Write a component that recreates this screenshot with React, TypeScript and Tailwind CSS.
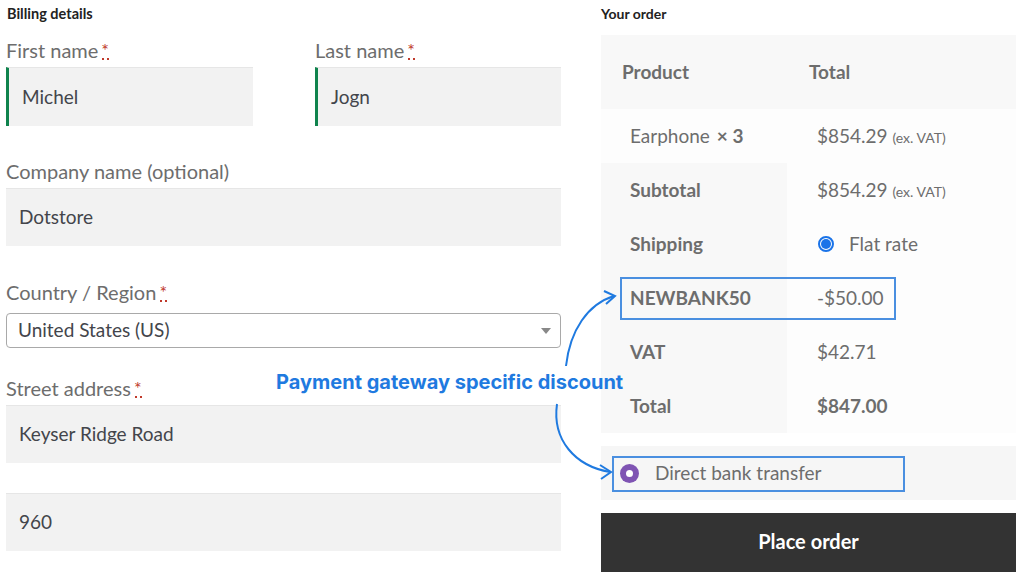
import React from "react";

function Label({ text, req }: { text: string; req?: boolean }) {
  return (
    <div className="h-[24px] leading-[24px] text-[20px] text-[#6d6d6d] flex items-center">
      <span>{text}</span>
      {req && (
        <span className="ml-[3px] relative text-[#c0392b] text-[18px] leading-[24px]">
          *
          <span className="absolute left-[1px] right-0 bottom-[2px] border-b-2 border-dotted border-[#c0392b]" />
        </span>
      )}
    </div>
  );
}

function Input({ value, green, h = "h-[59px]" }: { value: string; green?: boolean; h?: string }) {
  return (
    <div
      className={`${h} bg-[#f2f2f2] flex items-center pl-[13px] text-[19px] text-[#43454b] border-t border-[#e6e6e6] ${green ? "border-l-[3px] border-l-[#0f834d] pl-[10px]" : ""}`}
    >
      {value}
    </div>
  );
}

export default function App() {
  return (
    <div className="relative w-[1024px] h-[578px] bg-white overflow-hidden" style={{ fontFamily: "Lato, 'Noto Sans', sans-serif" }}>
      <div className="flex">
        {/* Left column */}
        <div className="ml-[6px] w-[555px]">
          <div className="h-[28px] leading-[28px] text-[14.5px] font-bold text-[#222] pl-[1px]">Billing details</div>
          <div className="mt-[10px] flex gap-[62px]">
            <div className="w-[247px]">
              <Label text="First name" req />
              <div className="mt-[5px]"><Input value="Michel" green /></div>
            </div>
            <div className="w-[246px]">
              <Label text="Last name" req />
              <div className="mt-[5px]"><Input value="Jogn" green /></div>
            </div>
          </div>
          <div className="mt-[33px]">
            <Label text="Company name (optional)" />
            <div className="mt-[5px]"><Input value="Dotstore" h="h-[58px]" /></div>
          </div>
          <div className="mt-[34px]">
            <Label text="Country / Region" req />
            <div className="mt-[9px] h-[35px] border border-[#a9a9a9] rounded-[4px] bg-white flex items-center justify-between pl-[11px] pr-[9px] text-[19px] text-[#43454b]">
              <span>United States (US)</span>
              <svg width="10" height="6" viewBox="0 0 10 6"><path d="M0 0 L10 0 L5 6 Z" fill="#888" /></svg>
            </div>
          </div>
          <div className="mt-[28px]">
            <Label text="Street address" req />
            <div className="mt-[5px]"><Input value="Keyser Ridge Road" h="h-[58px]" /></div>
          </div>
          <div className="mt-[30px]">
            <Input value="960" h="h-[58px]" />
          </div>
        </div>

        {/* Right column */}
        <div className="ml-[40px] w-[415px]">
          <div className="h-[28px] leading-[28px] text-[14px] font-bold text-[#222]">Your order</div>
          <div className="mt-[7px] text-[19px] text-[#6d6d6d]">
            <div className="h-[74px] bg-[#f8f8f8] flex items-center font-bold">
              <div className="w-[186px] pl-[21px]">Product</div>
              <div className="pl-[22px]">Total</div>
            </div>
            <div className="h-[54px] bg-[#fdfdfd] flex items-center">
              <div className="w-[186px] pl-[29px]">Earphone <strong className="ml-[2px]">× 3</strong></div>
              <div className="pl-[30px]">$854.29 <small className="text-[14px]">(ex. VAT)</small></div>
            </div>
            {[
              ["Subtotal", <span>$854.29 <small className="text-[14px]">(ex. VAT)</small></span>],
              ["Shipping", <span className="flex items-center gap-[15px] pl-[1px]"><span className="w-[16px] h-[16px] rounded-full border-2 border-[#1a73e8] flex items-center justify-center"><span className="w-[10px] h-[10px] rounded-full bg-[#1a73e8]" /></span>Flat rate</span>],
              ["NEWBANK50", <span>-$50.00</span>],
              ["VAT", <span>$42.71</span>],
              ["Total", <strong>$847.00</strong>],
            ].map(([k, v], i) => (
              <div key={i} className="h-[54px] flex">
                <div className="w-[186px] bg-[#f8f8f8] pl-[29px] flex items-center font-bold">{k}</div>
                <div className="flex-1 bg-[#fdfdfd] pl-[30px] flex items-center">{v}</div>
              </div>
            ))}
          </div>
          <div className="mt-[13px] h-[54px] bg-[#f6f6f6] flex items-center pl-[19px] text-[19px] text-[#6d6d6d]">
            <span className="w-[19px] h-[19px] rounded-full bg-[#7f54b3] flex items-center justify-center mr-[16px]">
              <span className="w-[7px] h-[7px] rounded-full bg-white" />
            </span>
            Direct bank transfer
          </div>
          <div className="mt-[13px] h-[59px] bg-[#333333] flex items-center justify-center text-white text-[20px] font-bold pb-[3px]">
            Place order
          </div>
        </div>
      </div>

      {/* Annotation overlays */}
      <div className="absolute left-[620px] top-[277px] w-[276px] h-[43px] border-2 border-[#4a8fe0]" />
      <div className="absolute left-[612px] top-[456px] w-[293px] h-[36px] border-2 border-[#4a8fe0]" />
      <div
        className="absolute left-[276px] top-[369px] text-[20px] font-bold text-[#1f7ae0] leading-[26px] whitespace-nowrap"
        style={{ fontFamily: "Inter, 'Liberation Sans', Arial, sans-serif" }}
      >
        Payment gateway specific discount
      </div>
      <svg className="absolute left-0 top-0 pointer-events-none" width="1024" height="578" viewBox="0 0 1024 578">
        <path d="M566 366 C570 330 588 304 614 296" fill="none" stroke="#1f7ae0" strokeWidth="2" />
        <path d="M604 291 L615 296 L606 304" fill="none" stroke="#1f7ae0" strokeWidth="2" />
        <path d="M557 404 C552 440 575 466 610 472" fill="none" stroke="#1f7ae0" strokeWidth="2" />
        <path d="M600 465 L611 472 L601 479" fill="none" stroke="#1f7ae0" strokeWidth="2" />
      </svg>
    </div>
  );
}
